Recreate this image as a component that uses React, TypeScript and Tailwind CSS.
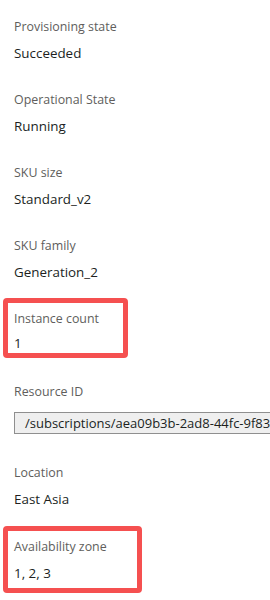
import React from "react";

const font = { fontFamily: '"Open Sans", "Noto Sans", sans-serif' };

function Label({ children }: { children: React.ReactNode }) {
  return <div className="h-[18px] leading-[18px] text-[12.4px] text-[#605e5c] whitespace-nowrap">{children}</div>;
}
function Value({ children, mt = "mt-[7px]" }: { children: React.ReactNode; mt?: string }) {
  return <div className={`${mt} h-[20px] leading-[20px] text-[13.4px] text-[#201f1e] whitespace-nowrap`}>{children}</div>;
}

export default function App() {
  return (
    <div className="w-[270px] h-[600px] overflow-hidden bg-white" style={font}>
      <div className="pt-[18px] pl-[3px] flex flex-col">
        <div className="pl-[11px]">
          <Label>Provisioning state</Label>
          <Value>Succeeded</Value>
        </div>
        <div className="pl-[11px] mt-[28px]">
          <Label>Operational State</Label>
          <Value>Running</Value>
        </div>
        <div className="pl-[11px] mt-[28px]">
          <Label>SKU size</Label>
          <Value>Standard_v2</Value>
        </div>
        <div className="pl-[11px] mt-[28px]">
          <Label>SKU family</Label>
          <Value>Generation_2</Value>
        </div>
        <div className="mt-[16px] w-[125px] border-[5px] border-[#f55050] rounded-[4px] pl-[6px] pt-[7px]">
          <Label>Instance count</Label>
          <Value mt="mt-[5px]">1</Value>
        </div>
        <div className="pl-[11px] mt-[25px]">
          <Label>Resource ID</Label>
          <div className="mt-[11px] h-[22px] w-[300px] border border-[#8f8f8f] bg-[#efefef] pl-[10px] leading-[20px] text-[13px] text-[#201f1e] whitespace-nowrap overflow-hidden">
            /subscriptions/aea09b3b-2ad8-44fc-9f83-7c2b1e6a0d5f
          </div>
        </div>
        <div className="pl-[11px] mt-[30px]">
          <Label>Location</Label>
          <Value>East Asia</Value>
        </div>
        <div className="mt-[17px] w-[139px] border-[5px] border-[#f55050] rounded-[4px] pl-[6px] pt-[7px] pb-[5px]">
          <Label>Availability zone</Label>
          <Value>1, 2, 3</Value>
        </div>
      </div>
    </div>
  );
}
